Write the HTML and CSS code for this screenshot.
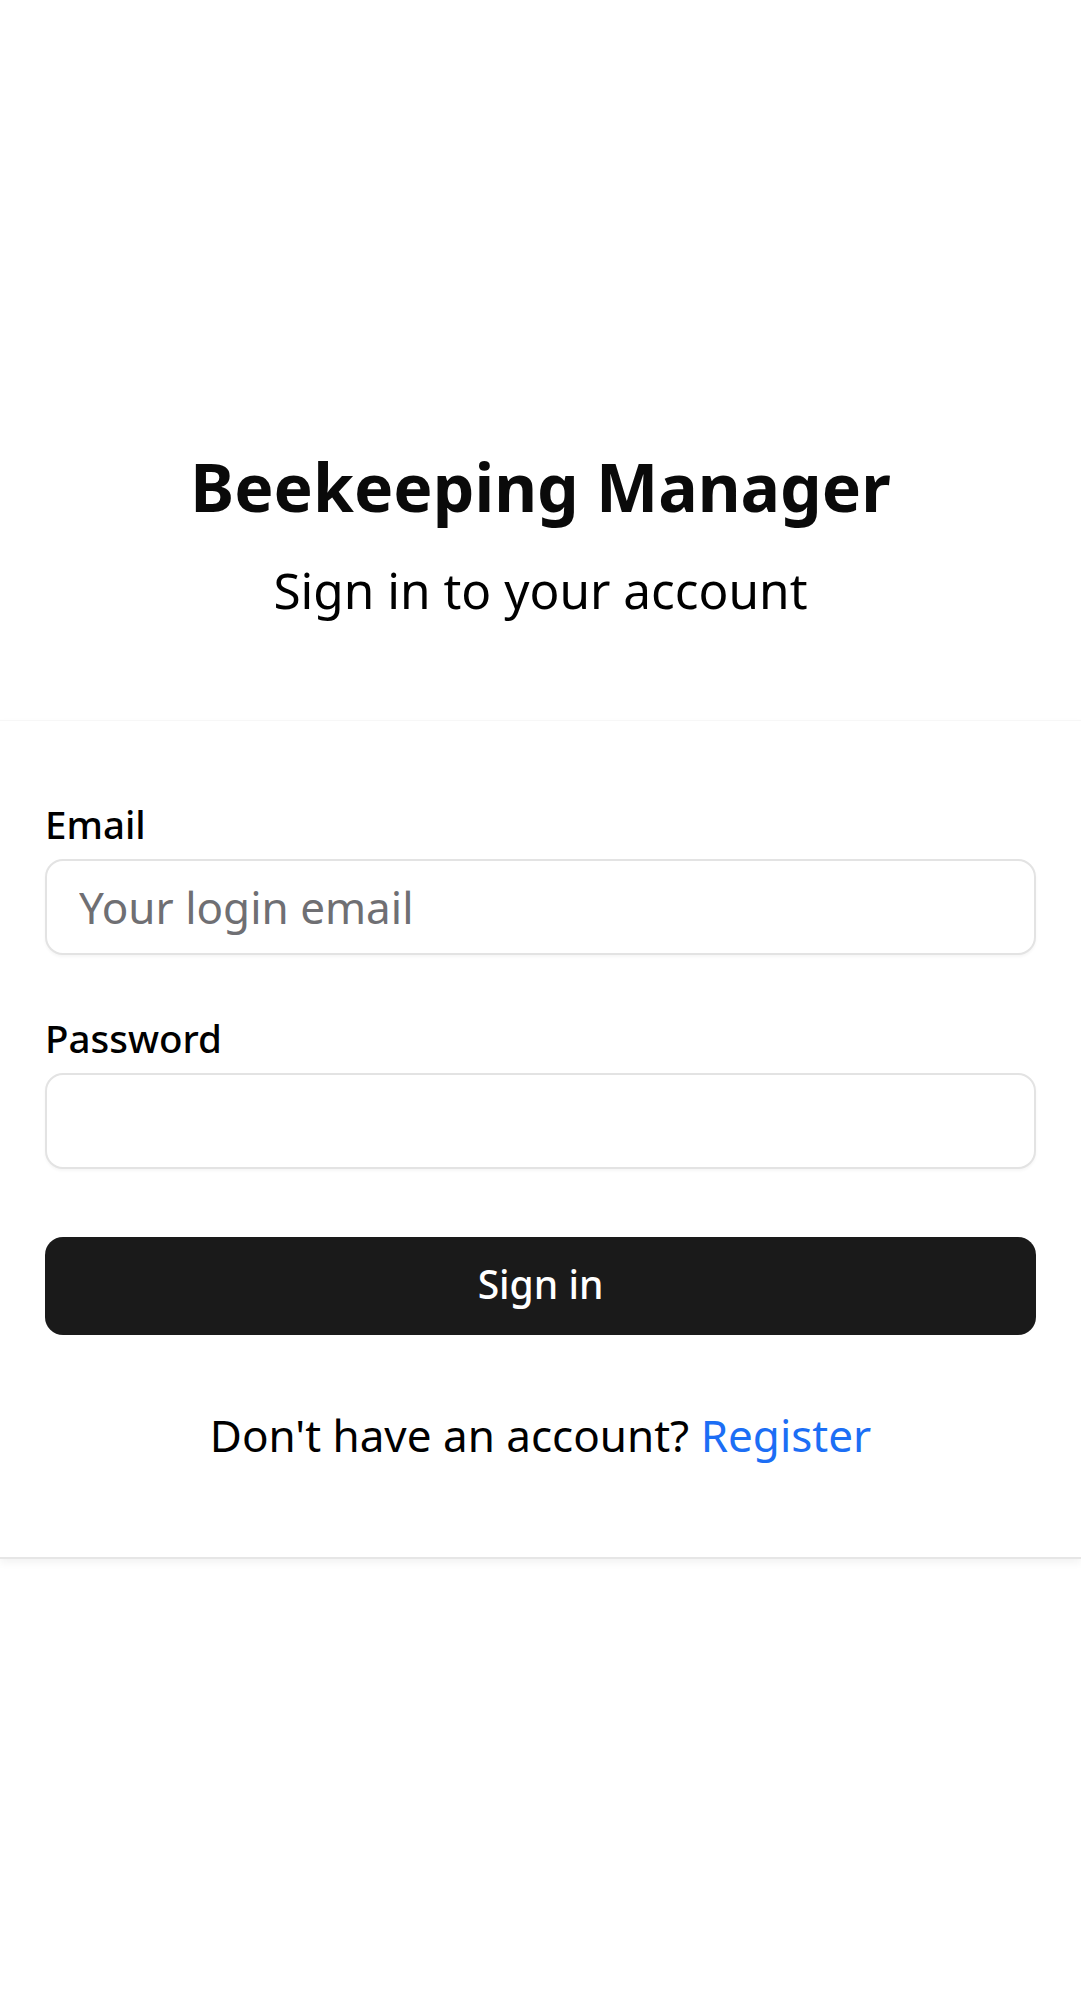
FILE: index.html
```html
<!DOCTYPE html>
<html lang="en">
<head>
<meta charset="utf-8">
<title>Beekeeping Manager - Sign in</title>
<link rel="stylesheet" href="styles.css">
</head>
<body>
<main class="page">
  <header class="intro">
    <h1 class="title">Beekeeping Manager</h1>
    <p class="subtitle">Sign in to your account</p>
  </header>
  <section class="card">
    <form class="form">
      <div class="field">
        <label class="label" for="email">Email</label>
        <input class="input" id="email" type="email" placeholder="Your login email">
      </div>
      <div class="field field-password">
        <label class="label" for="password">Password</label>
        <input class="input" id="password" type="password">
      </div>
      <button class="button" type="button">Sign in</button>
    </form>
    <p class="footer-text">Don't have an account? <a class="link" href="#">Register</a></p>
  </section>
</main>
</body>
</html>
```

FILE: styles.css
```css
html, body {
  margin: 0;
  padding: 0;
  background: #ffffff;
}
body {
  font-family: "Noto Sans", "Open Sans", sans-serif;
  color: #000000;
}
.page {
  display: flex;
  flex-direction: column;
  padding-top: 443px;
  padding-bottom: 40px;
}
.intro {
  display: flex;
  flex-direction: column;
  align-items: center;
}
.title {
  margin: 0;
  font-size: 66px;
  line-height: 86px;
  font-weight: 700;
  color: #0a0a0a;
}
.subtitle {
  margin: 26px 0 0;
  font-size: 49.5px;
  line-height: 70px;
  font-weight: 400;
}
.card {
  margin-top: 95px;
  background: #ffffff;
  border-top: 1px solid #f7f7f7;
  border-bottom: 2px solid #e6e6e6;
  box-shadow: 0 4px 8px rgba(0, 0, 0, 0.05);
  padding: 74px 45px 85px;
  display: flex;
  flex-direction: column;
}
.form {
  display: flex;
  flex-direction: column;
  margin: 0;
}
.field {
  display: flex;
  flex-direction: column;
  gap: 6px;
}
.field-password {
  margin-top: 54px;
}
.label {
  font-size: 38.5px;
  line-height: 58px;
  font-weight: 500;
}
.input {
  box-sizing: border-box;
  height: 96px;
  width: 100%;
  border: 2px solid #e3e3e3;
  border-radius: 18px;
  padding: 0 32px;
  font-family: inherit;
  font-size: 44px;
  color: #000;
  background: #fff;
  box-shadow: 0 2px 3px rgba(0, 0, 0, 0.04);
  outline: none;
}
.input::placeholder {
  color: #6f6f73;
}
.button {
  margin-top: 68px;
  height: 98px;
  padding: 0 0 6px;
  border: none;
  border-radius: 18px;
  background: #1a1a1a;
  color: #ffffff;
  font-family: inherit;
  font-size: 39px;
  font-weight: 500;
  cursor: pointer;
}
.footer-text {
  margin: 64px 0 0;
  text-align: center;
  font-size: 44px;
  line-height: 73px;
}
.link {
  color: #1c6ef5;
  text-decoration: none;
}
```
